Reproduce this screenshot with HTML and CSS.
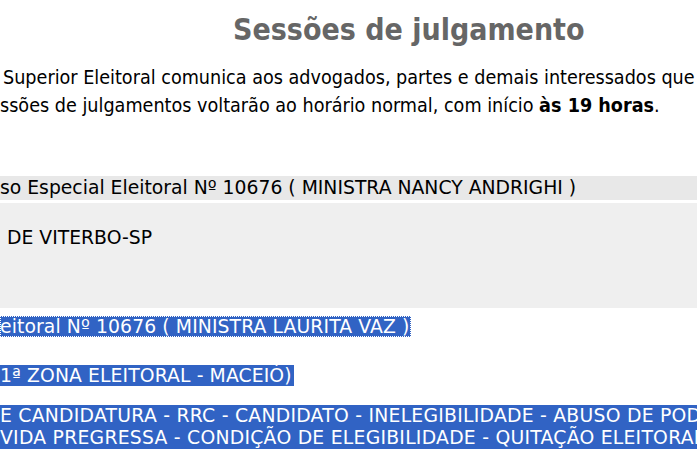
FILE: index.html
```html
<!DOCTYPE html>
<html lang="pt-BR">
<head>
<meta charset="utf-8">
<title>Sessões de julgamento</title>
<link rel="stylesheet" href="styles.css">
</head>
<body>
<div class="page">
  <h1 class="title">Sessões de julgamento</h1>
  <p class="notice">
    <span class="line first">Superior Eleitoral comunica aos advogados, partes e demais interessados que</span>
    <span class="line">ssões de julgamentos voltarão ao horário normal, com início <b>às 19 horas</b>.</span>
  </p>
  <div class="process">
    <div class="proc-head">so Especial Eleitoral Nº 10676 ( MINISTRA NANCY ANDRIGHI )</div>
    <div class="proc-body">DE VITERBO-SP</div>
  </div>
  <div class="selected">
    <div class="sel-row r1"><span class="sel focus">eitoral Nº 10676 ( MINISTRA LAURITA VAZ )</span></div>
    <div class="sel-row r2"><span class="sel">1ª ZONA ELEITORAL - MACEIÓ)</span></div>
    <div class="sel-block">
      <span class="sel-line">E CANDIDATURA - RRC - CANDIDATO - INELEGIBILIDADE - ABUSO DE PODER</span>
      <span class="sel-line">VIDA PREGRESSA - CONDIÇÃO DE ELEGIBILIDADE - QUITAÇÃO ELEITORAL</span>
    </div>
  </div>
</div>
</body>
</html>
```

FILE: styles.css
```css
html, body {
  margin: 0;
  padding: 0;
  background: #ffffff;
  overflow: hidden;
}
.page {
  width: 697px;
  height: 465px;
  overflow: hidden;
}
.title {
  margin: 0;
  padding: 12px 0 0 233px;
  font-family: "DejaVu Sans Condensed", "DejaVu Sans", sans-serif;
  font-stretch: condensed;
  font-weight: bold;
  font-size: 30px;
  line-height: 36px;
  color: #666666;
  white-space: nowrap;
}
.notice {
  margin: 16px 0 0 0;
  font-family: "DejaVu Sans Condensed", "DejaVu Sans", sans-serif;
  font-stretch: condensed;
  font-size: 19.6px;
  line-height: 28px;
  color: #000;
}
.notice .line {
  display: block;
  white-space: nowrap;
}
.notice .first {
  padding-left: 3px;
}
.process {
  margin-top: 56px;
  font-family: "DejaVu Sans", Verdana, sans-serif;
  font-size: 18.8px;
  color: #000;
}
.proc-head {
  height: 24px;
  line-height: 24px;
  background: #e8e8e8;
  white-space: nowrap;
}
.proc-body {
  margin-top: 3px;
  height: 105px;
  background: #efefef;
  padding: 23px 0 0 7px;
  box-sizing: border-box;
  line-height: 24px;
}
.selected {
  font-family: "DejaVu Sans", Verdana, sans-serif;
  font-size: 18.8px;
  color: #fff;
}
.sel-row {
  height: 21px;
  line-height: 21px;
  white-space: nowrap;
  letter-spacing: 0.1px;
}
.r1 { margin-top: 8px; }
.r2 { margin-top: 28px; }
.sel {
  display: inline-block;
  background: #3163c4;
  padding-right: 2px;
}
.focus {
  outline: 1px dotted #ffffff;
  outline-offset: -1px;
}
.sel-block {
  margin-top: 19px;
  background: #3163c4;
  white-space: nowrap;
  letter-spacing: 0.25px;
}
.sel-line {
  display: block;
  height: 22px;
  line-height: 22px;
}
```
